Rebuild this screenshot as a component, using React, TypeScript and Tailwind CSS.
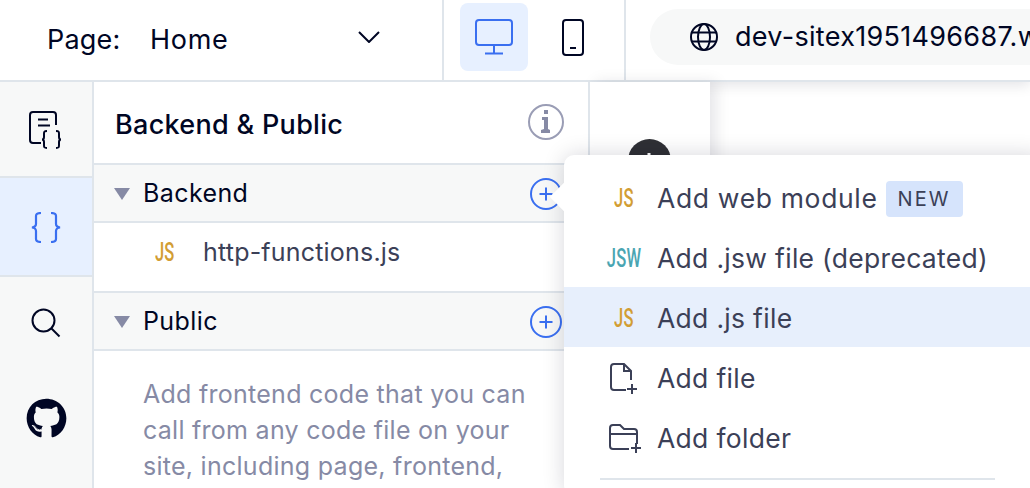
import { FaGithub } from "react-icons/fa";

const JsBadge = ({ label = "JS", color = "text-[#d29d33]" }: { label?: string; color?: string }) => (
  <span className={`inline-block origin-center scale-x-[0.66] font-['Roboto',sans-serif] text-[25px] font-medium leading-none ${color}`}>
    {label}
  </span>
);

const PlusCircle = () => (
  <svg width="32" height="32" viewBox="0 0 32 32" fill="none" stroke="#3a6ff0" strokeWidth="2">
    <circle cx="16" cy="16" r="15" />
    <path d="M16 9.5v13M9.5 16h13" />
  </svg>
);

const Triangle = () => (
  <svg className="shrink-0" width="16" height="12" viewBox="0 0 16 12" fill="#868aa5">
    <path d="M0 0h16L8 12z" />
  </svg>
);

const menuItems = [
  { label: "Add web module", icon: <JsBadge />, badge: true },
  { label: "Add .jsw file (deprecated)", icon: <JsBadge label="JSW" color="text-[#4aa5b2]" /> },
  { label: "Add .js file", icon: <JsBadge />, active: true },
  {
    label: "Add file",
    icon: (
      <svg width="28" height="32" viewBox="0 0 28 32" fill="none" stroke="#3b4057" strokeWidth="2">
        <path d="M21 17V8l-7-7H4a3 3 0 0 0-3 3v20a3 3 0 0 0 3 3h12M14 1v7h7M22 21v10M17 26h10" />
      </svg>
    ),
  },
  {
    label: "Add folder",
    icon: (
      <svg className="ml-[3px]" width="32" height="30" viewBox="0 0 32 30" fill="none" stroke="#3b4057" strokeWidth="2">
        <path d="M1 10V4a3 3 0 0 1 3-3h7l4 4h10a3 3 0 0 1 3 3v12M1 10h27M1 10v12a3 3 0 0 0 3 3h16M27 19v10M22 24h10" />
      </svg>
    ),
  },
];

export default function App() {
  return (
    <div className="relative flex h-[488px] w-[1030px] flex-col overflow-hidden bg-white font-['Inter',sans-serif] text-[#000624]">
      <header className="relative z-10 flex h-[82px] shrink-0 border-b-2 border-[#dfe5eb] bg-white shadow-[0_4px_12px_rgba(0,6,36,0.1)]">
        <div className="flex w-[444px] shrink-0 items-center border-r-2 border-[#dfe5eb] pl-[47px] pr-[62px] text-[27px] tracking-[0.2px]">
          <span className="w-[103px]">Page:</span>
          <span className="tracking-[0.7px]">Home</span>
          <svg className="mb-[7px] ml-auto" width="22" height="12" viewBox="0 0 22 12" fill="none" stroke="#000624" strokeWidth="2">
            <path d="M1 1l10 10L21 1" />
          </svg>
        </div>
        <div className="flex w-[182px] shrink-0 items-start gap-[8px] border-r-2 border-[#dfe5eb] pl-[16px] pt-[3px]">
          <div className="flex h-[68px] w-[68px] items-center justify-center rounded-[8px] bg-[#e7f0ff]">
            <svg width="38" height="36" viewBox="0 0 38 36" fill="none" stroke="#3a6ff0" strokeWidth="2">
              <rect x="1" y="1" width="36" height="25" rx="3" />
              <path d="M19 26v8M10 34.500h18" />
            </svg>
          </div>
          <div className="flex h-[68px] w-[68px] items-center justify-center pl-[5px] pt-[1px]">
            <svg width="24" height="38" viewBox="0 0 24 38" fill="none" stroke="#000624" strokeWidth="2">
              <rect x="2" y="1" width="20" height="35" rx="3" />
              <path d="M9 29h6" />
            </svg>
          </div>
        </div>
        <div className="ml-[24px] mt-[9px] flex h-[56px] min-w-0 flex-1 items-center gap-[17px] overflow-hidden rounded-l-[28px] bg-[#f7f8f8] pl-[40px]">
          <svg className="shrink-0" width="28" height="28" viewBox="0 0 28 28" fill="none" stroke="#000624" strokeWidth="2">
            <circle cx="14" cy="14" r="13" />
            <ellipse cx="14" cy="14" rx="6" ry="13" />
            <path d="M2 9.500h24M2 18.500h24" />
          </svg>
          <span className="whitespace-nowrap text-[27px] tracking-[0.3px]">dev-sitex1951496687.wixsite.com</span>
        </div>
      </header>

      <div className="flex min-h-0 flex-1">
        <nav className="relative z-[15] flex w-[94px] shrink-0 flex-col border-r-2 border-[#dfe5eb] bg-[#f7f8f8]">
          <div className="flex h-[96px] items-center justify-center border-b-2 border-[#dfe5eb] pt-[2px]">
            <svg width="34" height="38" viewBox="0 0 34 38" fill="none" stroke="#000624" strokeWidth="2">
              <path d="M27 14V4a3 3 0 0 0-3-3H4a3 3 0 0 0-3 3v25a3 3 0 0 0 3 3h8M9 8.500h10M9 14.500h12" />
              <path d="M18 20c-3 0-3 1-3 3v3c0 2-1 2.500-2 2.500 1 0 2 .5 2 2.500v3c0 2 0 3 3 3M27 20c3 0 3 1 3 3v3c0 2 1 2.500 2 2.500-1 0-2 .5-2 2.500v3c0 2 0 3-3 3" />
            </svg>
          </div>
          <div className="flex h-[99px] items-center justify-center border-b-2 border-[#dfe5eb] bg-[#e7f0ff] pt-[1px]">
            <svg width="30" height="31" viewBox="0 0 30 31" fill="none" stroke="#3a6ff0" strokeWidth="2.200">
              <path d="M10 1C6 1 5 2 5 4v8c0 2-1 3-4 3.500 3 .5 4 1.500 4 3.500v8c0 2 1 3 5 3M20 1c4 0 5 1 5 3v8c0 2 1 3 4 3.500-3 .5-4 1.500-4 3.500v8c0 2-1 3-5 3" />
            </svg>
          </div>
          <div className="flex h-[92px] items-center justify-center">
            <svg width="30" height="30" viewBox="0 0 30 30" fill="none" stroke="#000624" strokeWidth="2">
              <circle cx="12.500" cy="12.500" r="11" />
              <path d="M20.500 20.500L28.500 28.500" />
            </svg>
          </div>
          <div className="flex justify-center pt-[29px]">
            <FaGithub size={41} color="#000624" />
          </div>
        </nav>

        <aside className="relative z-[15] flex w-[496px] shrink-0 flex-col border-r-2 border-[#dfe5eb] bg-white">
          <div className="flex h-[83px] shrink-0 items-center justify-between border-b-2 border-[#dfe5eb] pl-[21px] pr-[24px] pt-[2px]">
            <h2 className="mt-[4px] text-[27px] font-medium tracking-[0.3px]">Backend &amp; Public</h2>
            <span className="mb-[3px] flex h-[36px] w-[36px] items-center justify-center rounded-full border-2 border-[#9a9db5]">
              <svg width="14" height="24" viewBox="0 0 14 24" fill="#868aa5">
                <path d="M5 0h4v4H5zM3 7h6v12l2 1v3H2v-3l3-1V10H3z" />
              </svg>
            </span>
          </div>
          <div className="flex h-[58px] shrink-0 items-center border-b-2 border-[#dfe5eb] bg-[#f7f8f8] pl-[20px] pr-[26px] pt-[2px] text-[25px] tracking-[0.4px]">
            <Triangle />
            <span className="ml-[13px]">Backend</span>
            <span className="ml-auto flex">
              <PlusCircle />
            </span>
          </div>
          <div className="flex h-[70px] shrink-0 items-center border-b-2 border-[#dfe5eb] pb-[9px] pl-[56px] text-[25px] tracking-[0.2px] text-[#3b4057]">
            <span className="flex w-[53px] justify-start">
              <JsBadge />
            </span>
            <span>http-functions.js</span>
          </div>
          <div className="flex h-[58px] shrink-0 items-center border-b-2 border-[#dfe5eb] bg-[#f7f8f8] pl-[20px] pr-[26px] pt-[2px] text-[25px] tracking-[0.4px]">
            <Triangle />
            <span className="ml-[13px]">Public</span>
            <span className="ml-auto flex">
              <PlusCircle />
            </span>
          </div>
          <p className="pl-[49px] pr-[56px] pt-[25px] text-[25px] leading-[36px] tracking-[0.27px] text-[#868aa5]">
            Add frontend code that you can call from any code file on your site, including page, frontend,
          </p>
        </aside>

        <div className="relative z-[12] flex w-[120px] shrink-0 justify-center bg-white pr-[2px] pt-[57px] shadow-[6px_0_14px_rgba(0,6,36,0.1)]">
          <span className="flex h-[43px] w-[43px] items-center justify-center rounded-full bg-[#2f3035]">
            <svg width="20" height="20" viewBox="0 0 20 20" stroke="#fff" strokeWidth="3">
              <path d="M10 2v16M2 10h16" />
            </svg>
          </span>
        </div>
        <div className="flex-1 bg-white" />
      </div>

      <div className="absolute left-[564px] top-[155px] z-20 h-[340px] w-[480px] rounded-[10px] bg-white pt-[12px] shadow-[0_0_22px_rgba(0,6,36,0.16)]">
        <div className="absolute left-[-10px] top-[32px] h-[20px] w-[20px] rotate-45 bg-white" />
        {menuItems.map((item) => (
          <div
            key={item.label}
            className={`relative flex h-[60px] items-center pt-[3px] text-[26.500px] tracking-[0.3px] text-[#3b4057] ${item.active ? "bg-[#e7effc]" : ""}`}
          >
            <span className="flex w-[93px] shrink-0 justify-center pl-[26px]">{item.icon}</span>
            <span className={`whitespace-nowrap ${item.badge ? "tracking-[0.65px]" : ""}`}>{item.label}</span>
            {item.badge && (
              <span className="ml-[8px] flex h-[36px] w-[77px] items-center justify-center rounded-[4px] bg-[#d6e4fc] text-[20px] tracking-[2px]">
                NEW
              </span>
            )}
          </div>
        ))}
        <div className="ml-[36px] mt-[11px] h-[2px] w-[395px] bg-[#dfe5eb]" />
      </div>
    </div>
  );
}
